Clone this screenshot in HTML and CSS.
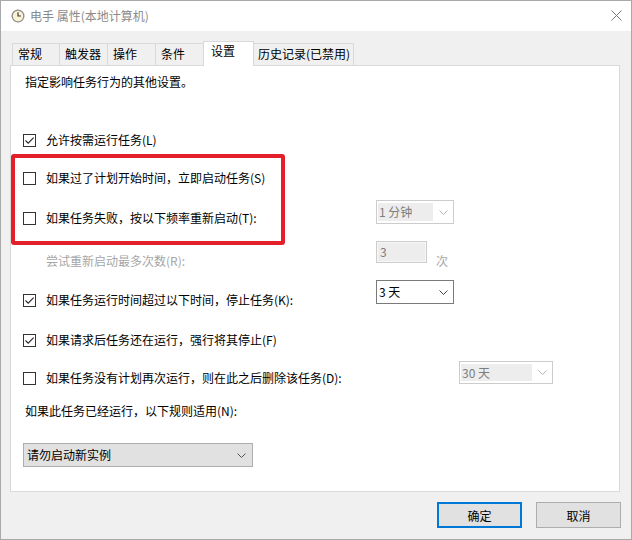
FILE: index.html
```html
<!DOCTYPE html>
<html>
<head>
  <title>电手 属性(本地计算机)</title>
  <link rel="stylesheet" href="styles.css">
</head>
<body>
  <div class="window">
    <div class="titlebar">
      <svg class="appIcon" width="14" height="14" viewBox="0 0 14 14">
        <circle cx="7" cy="7" r="6.5" fill="#8c8c8c"/>
        <circle cx="7" cy="7" r="5.2" fill="#fbf3d4"/>
        <path d="M7 3.2 V7 H10" fill="none" stroke="#3a3a3a" stroke-width="1.2"/>
      </svg>
      <span class="title">电手 属性(本地计算机)</span>
      <svg class="closeIcon" width="11" height="11" viewBox="0 0 11 11">
        <path d="M0.5 0.5 L10.5 10.5 M10.5 0.5 L0.5 10.5" stroke="#7a7a7a" stroke-width="1"/>
      </svg>
    </div>

    <div class="content">
      <div class="tabs">
        <div class="tab tabGeneral">常规</div>
        <div class="tab tabWide">触发器</div>
        <div class="tab tabWide">操作</div>
        <div class="tab tabWide">条件</div>
        <div class="tab tabSettings active">设置</div>
        <div class="tab tabHistory">历史记录(已禁用)</div>
      </div>

      <div class="panel">
        <div class="desc">指定影响任务行为的其他设置。</div>

        <div class="row row1">
          <span class="box checked"><svg width="11" height="11" viewBox="0 0 11 11"><path d="M1.5 5.5 L4.2 8.2 L9.6 2.6" fill="none" stroke="#222" stroke-width="1.1"/></svg></span>
          <span class="label">允许按需运行任务(L)</span>
        </div>

        <div class="row row2">
          <span class="box"></span>
          <span class="label">如果过了计划开始时间，立即启动任务(S)</span>
        </div>

        <div class="row row3">
          <span class="box"></span>
          <span class="label">如果任务失败，按以下频率重新启动(T):</span>
          <div class="combo off comboRestart">
            <span class="value">1 分钟</span>
            <span class="arrow"><svg width="9" height="5" viewBox="0 0 9 5"><path d="M0.5 0.5 L4.5 4.5 L8.5 0.5" fill="none" stroke="#b5b5b5"/></svg></span>
          </div>
        </div>

        <div class="row row4">
          <span class="label plain">尝试重新启动最多次数(R):</span>
          <span class="field">3</span>
          <span class="unit">次</span>
        </div>

        <div class="row row5">
          <span class="box checked"><svg width="11" height="11" viewBox="0 0 11 11"><path d="M1.5 5.5 L4.2 8.2 L9.6 2.6" fill="none" stroke="#222" stroke-width="1.1"/></svg></span>
          <span class="label">如果任务运行时间超过以下时间，停止任务(K):</span>
          <div class="combo comboStop">
            <span class="value">3 天</span>
            <span class="arrow"><svg width="9" height="5" viewBox="0 0 9 5"><path d="M0.5 0.5 L4.5 4.5 L8.5 0.5" fill="none" stroke="#444"/></svg></span>
          </div>
        </div>

        <div class="row row6">
          <span class="box checked"><svg width="11" height="11" viewBox="0 0 11 11"><path d="M1.5 5.5 L4.2 8.2 L9.6 2.6" fill="none" stroke="#222" stroke-width="1.1"/></svg></span>
          <span class="label">如果请求后任务还在运行，强行将其停止(F)</span>
        </div>

        <div class="row row7">
          <span class="box"></span>
          <span class="label long">如果任务没有计划再次运行，则在此之后删除该任务(D):</span>
          <div class="combo off comboDelete">
            <span class="value">30 天</span>
            <span class="arrow"><svg width="9" height="5" viewBox="0 0 9 5"><path d="M0.5 0.5 L4.5 4.5 L8.5 0.5" fill="none" stroke="#b5b5b5"/></svg></span>
          </div>
        </div>

        <div class="rule">如果此任务已经运行，以下规则适用(N):</div>

        <div class="combo button comboRule">
          <span class="value">请勿启动新实例</span>
          <span class="arrow"><svg width="9" height="5" viewBox="0 0 9 5"><path d="M0.5 0.5 L4.5 4.5 L8.5 0.5" fill="none" stroke="#555"/></svg></span>
        </div>

        <div class="mark"></div>
      </div>

      <div class="buttons">
        <button class="btn default">确定</button>
        <button class="btn">取消</button>
      </div>
    </div>
  </div>
</body>
</html>
```

FILE: styles.css
```css
body {
  margin: 0;
  font-family: "Noto Sans CJK SC", "Noto Sans", sans-serif;
  font-size: 12px;
  color: #000;
}

.window {
  box-sizing: border-box;
  width: 632px;
  height: 540px;
  border: 1px solid #a9a9a9;
  background-color: #f0f0f0;
}

.titlebar {
  display: flex;
  align-items: center;
  height: 30px;
  padding: 0 9px 0 10px;
  background-color: #fff;
}

.appIcon {
  flex: none;
}

.title {
  margin-left: 5px;
  color: #8a8a8a;
  line-height: 16px;
}

.closeIcon {
  margin-left: auto;
  margin-top: -1px;
}

.content {
  padding: 12px 11px 0 9px;
}

/* tabs */

.tabs {
  display: flex;
  align-items: flex-end;
  height: 22px;
  padding-left: 3px;
}

.tab {
  box-sizing: border-box;
  height: 22px;
  margin-left: -1px;
  padding: 2px 0 0 5px;
  border: 1px solid #d9d9d9;
  border-bottom: none;
  line-height: 16px;
  white-space: nowrap;
}

.tabGeneral {
  width: 48px;
}

.tabWide {
  width: 49px;
}

.tabSettings {
  width: 51px;
}

.tabHistory {
  width: 101px;
  padding-left: 4px;
}

.tab.active {
  position: relative;
  z-index: 1;
  height: 25px;
  margin-bottom: -1px;
  padding: 1px 0 0 7px;
  background-color: #fff;
}

/* panel */

.panel {
  position: relative;
  box-sizing: border-box;
  height: 427px;
  padding-left: 12px;
  border: 1px solid #d9d9d9;
  background-color: #fff;
}

.desc {
  margin: 6px 0 0 2px;
  line-height: 20px;
}

.row {
  display: flex;
  align-items: center;
  height: 20px;
}

.row1 { margin-top: 38px; }
.row2 { margin-top: 18px; }
.row3 { margin-top: 20px; }
.row4 { margin-top: 23px; }
.row5 { margin-top: 19px; }
.row6 { margin-top: 20px; }
.row7 { margin-top: 18px; }

.box {
  box-sizing: border-box;
  display: flex;
  align-items: center;
  justify-content: center;
  flex: none;
  width: 13px;
  height: 13px;
  margin-right: 10px;
  border: 1px solid #333;
  background-color: #fff;
}

.label {
  flex: none;
  width: 330px;
  line-height: 16px;
  white-space: nowrap;
}

.label.long {
  width: 413px;
}

.label.plain {
  margin-left: 23px;
  color: #a6a6a6;
}

/* combo boxes */

.combo {
  box-sizing: border-box;
  display: flex;
  align-items: center;
  height: 24px;
  border: 1px solid #7a7a7a;
  background-color: #fff;
  line-height: 16px;
}

.combo .value {
  flex: 1;
  padding-left: 2px;
  white-space: nowrap;
}

.combo .arrow {
  display: flex;
  justify-content: center;
  width: 20px;
}

.combo.off {
  border-color: #cccccc;
  color: #7d7d7d;
}

.combo.off .value {
  align-self: stretch;
  display: flex;
  align-items: center;
  margin: 2px 0 2px 1px;
  padding-left: 1px;
  background-color: #ededed;
}

.comboRestart {
  width: 78px;
  margin-bottom: 12px;
}

.comboStop {
  width: 78px;
  margin-bottom: 16px;
}

.comboDelete {
  width: 94px;
  height: 23px;
  margin-bottom: 11px;
}

.combo.button {
  border-color: #adadad;
  background-color: #e1e1e1;
}

.comboRule {
  width: 230px;
  margin-top: 22px;
}

.comboRule .value {
  padding-left: 3px;
}

.comboRule .arrow {
  width: 22px;
}

.field {
  box-sizing: border-box;
  width: 51px;
  height: 22px;
  margin-bottom: 18px;
  padding: 2px 0 0 3px;
  border: 1px solid #cccccc;
  box-shadow: inset 0 0 0 1px #f7f7f7;
  background-color: #ededed;
  color: #7d7d7d;
  line-height: 16px;
}

.unit {
  margin-left: 9px;
  color: #a6a6a6;
  line-height: 16px;
}

.rule {
  margin: 13px 0 0 2px;
  line-height: 20px;
}

/* red annotation frame */

.mark {
  position: absolute;
  left: 0;
  top: 88px;
  box-sizing: border-box;
  width: 274px;
  height: 91px;
  border: 4px solid #e3202a;
  border-radius: 3px;
}

/* buttons */

.buttons {
  display: flex;
  justify-content: flex-end;
  gap: 14px;
  margin: 10px -1px 0 0;
}

.btn {
  box-sizing: border-box;
  width: 85px;
  height: 26px;
  padding: 0;
  border: 1px solid #adadad;
  background-color: #e1e1e1;
  font-family: inherit;
  font-size: 12px;
  color: #000;
}

.btn.default {
  border: 2px solid #0078d7;
}
```
